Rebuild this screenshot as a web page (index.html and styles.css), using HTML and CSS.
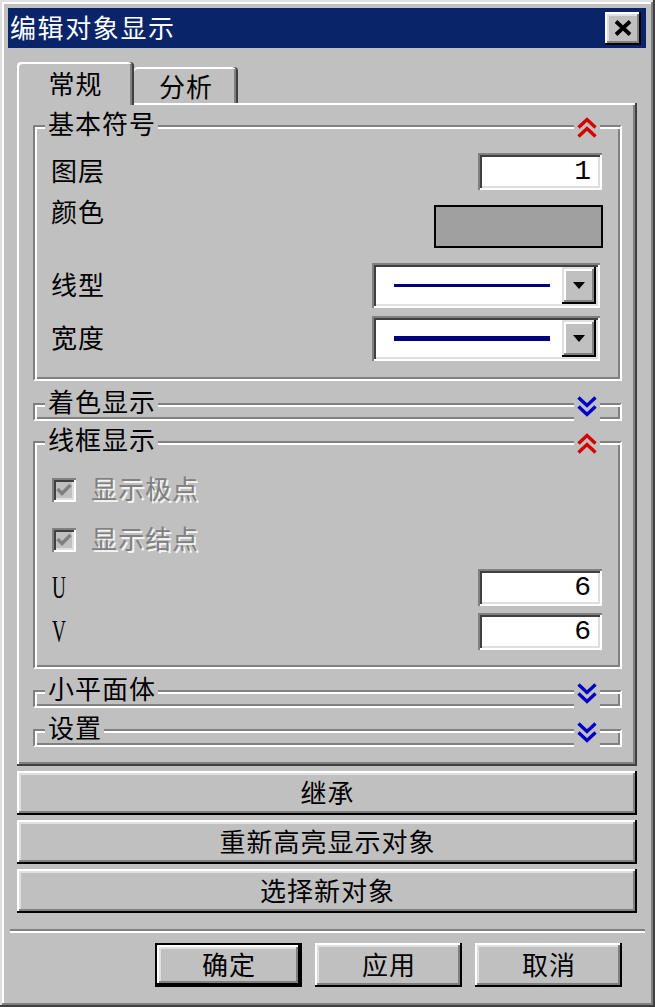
FILE: index.html
```html
<!DOCTYPE html>
<html lang="zh-CN">
<head>
<meta charset="utf-8">
<title>编辑对象显示</title>
<link rel="stylesheet" href="styles.css">
</head>
<body>
<div class="window">
  <div class="titlebar">
    <span class="title">编辑对象显示</span>
    <button class="close" aria-label="关闭">
      <svg width="18" height="16" viewBox="0 0 18 16"><path d="M2 1.5 L16 14.5 M16 1.5 L2 14.5" stroke="#000" stroke-width="3.8" fill="none"/></svg>
    </button>
  </div>

  <div class="tabs">
    <div class="tab active">常规</div>
    <div class="tab">分析</div>
  </div>

  <div class="panel">
    <div class="group g1">
      <div class="ghead">
        <span class="legend">基本符号</span>
        <span class="chev"><svg width="22" height="24" viewBox="0 0 22 24"><path d="M2.5 11.5 L11 3.5 L19.5 11.5 M2.5 20.5 L11 12.5 L19.5 20.5" fill="none" stroke="#d40000" stroke-width="3.4"/></svg></span>
      </div>
      <div class="gbody">
        <div class="row r-layer">
          <span class="label">图层</span>
          <div class="field">1</div>
        </div>
        <div class="row r-color">
          <span class="label top">颜色</span>
          <div class="swatch"></div>
        </div>
        <div class="row r-combo r-type">
          <span class="label">线型</span>
          <div class="combo">
            <div class="combo-value"><span class="line thin"></span></div>
            <div class="combo-btn"><svg width="12" height="7" viewBox="0 0 12 7"><polygon points="0,0 12,0 6,7" fill="#000"/></svg></div>
          </div>
        </div>
        <div class="row r-combo r-width">
          <span class="label">宽度</span>
          <div class="combo">
            <div class="combo-value"><span class="line thick"></span></div>
            <div class="combo-btn"><svg width="12" height="7" viewBox="0 0 12 7"><polygon points="0,0 12,0 6,7" fill="#000"/></svg></div>
          </div>
        </div>
      </div>
    </div>

    <div class="group collapsed g2">
      <div class="ghead">
        <span class="legend">着色显示</span>
        <span class="chev"><svg width="22" height="24" viewBox="0 0 22 24"><path d="M2.5 3.5 L11 11.5 L19.5 3.5 M2.5 12.5 L11 20.5 L19.5 12.5" fill="none" stroke="#0000c8" stroke-width="3.4"/></svg></span>
      </div>
    </div>

    <div class="group g3">
      <div class="ghead">
        <span class="legend">线框显示</span>
        <span class="chev"><svg width="22" height="24" viewBox="0 0 22 24"><path d="M2.5 11.5 L11 3.5 L19.5 11.5 M2.5 20.5 L11 12.5 L19.5 20.5" fill="none" stroke="#d40000" stroke-width="3.4"/></svg></span>
      </div>
      <div class="gbody">
        <div class="row r-check first">
          <span class="checkbox"><svg width="18" height="18" viewBox="0 0 18 18"><path d="M2.5 8 L7 12.5 L15.5 4" fill="none" stroke="#808080" stroke-width="3.4"/></svg></span>
          <span class="disabled-text">显示极点</span>
        </div>
        <div class="row r-check second">
          <span class="checkbox"><svg width="18" height="18" viewBox="0 0 18 18"><path d="M2.5 8 L7 12.5 L15.5 4" fill="none" stroke="#808080" stroke-width="3.4"/></svg></span>
          <span class="disabled-text">显示结点</span>
        </div>
        <div class="row r-u">
          <span class="label serif">U</span>
          <div class="field">6</div>
        </div>
        <div class="row r-v">
          <span class="label serif">V</span>
          <div class="field">6</div>
        </div>
      </div>
    </div>

    <div class="group collapsed g4">
      <div class="ghead">
        <span class="legend">小平面体</span>
        <span class="chev"><svg width="22" height="24" viewBox="0 0 22 24"><path d="M2.5 3.5 L11 11.5 L19.5 3.5 M2.5 12.5 L11 20.5 L19.5 12.5" fill="none" stroke="#0000c8" stroke-width="3.4"/></svg></span>
      </div>
    </div>

    <div class="group collapsed g5">
      <div class="ghead">
        <span class="legend">设置</span>
        <span class="chev"><svg width="22" height="24" viewBox="0 0 22 24"><path d="M2.5 3.5 L11 11.5 L19.5 3.5 M2.5 12.5 L11 20.5 L19.5 12.5" fill="none" stroke="#0000c8" stroke-width="3.4"/></svg></span>
      </div>
    </div>
  </div>

  <div class="actions">
    <button class="btn wide">继承</button>
    <button class="btn wide">重新高亮显示对象</button>
    <button class="btn wide">选择新对象</button>
  </div>

  <div class="separator"></div>

  <div class="footer">
    <button class="btn small default">确定</button>
    <button class="btn small">应用</button>
    <button class="btn small">取消</button>
  </div>
</div>
</body>
</html>
```

FILE: styles.css
```css
* { box-sizing: border-box; }

html, body {
  margin: 0;
  padding: 0;
}

body {
  width: 655px;
  height: 1007px;
  overflow: hidden;
  background: #c0c0c0;
  color: #000;
  font-family: "Noto Sans CJK SC", "Noto Sans", sans-serif;
  font-size: 26px;
  line-height: 26px;
  letter-spacing: 1px;
}

.window {
  width: 655px;
  height: 1007px;
  padding: 8px 9px 0 8px;
  background: #c0c0c0;
  box-shadow:
    inset -2px -2px 0 #404040,
    inset 2px 2px 0 #dfdfdf,
    inset -4px -4px 0 #808080,
    inset 4px 4px 0 #fff;
}

/* title bar */
.titlebar {
  height: 40px;
  background: #0a246a;
  display: flex;
  align-items: center;
  justify-content: space-between;
  padding: 0 5px 0 2px;
}

.title {
  color: #fff;
  font-size: 26px;
  line-height: 40px;
  letter-spacing: 1.6px;
  padding-bottom: 2px;
}

.close {
  width: 36px;
  height: 33px;
  padding: 0;
  margin: 0;
  border: 0;
  background: #c0c0c0;
  display: flex;
  align-items: center;
  justify-content: center;
  box-shadow:
    inset -2px -2px 0 #000,
    inset 2px 2px 0 #fff,
    inset -4px -4px 0 #808080,
    inset 4px 4px 0 #dfdfdf;
}

/* tabs */
.tabs {
  position: relative;
  z-index: 1;
  display: flex;
  align-items: flex-end;
  height: 43px;
  margin: 14px 0 -2px 9px;
}

.tab {
  display: flex;
  justify-content: center;
  background: #c0c0c0;
  border-radius: 4px 4px 0 0;
  box-shadow:
    inset -2px 0 0 #404040,
    inset 2px 2px 0 #fff,
    inset -4px 0 0 #808080;
}

.tab.active {
  width: 117px;
  height: 43px;
  padding-top: 8px;
}

.tab:not(.active) {
  width: 104px;
  height: 36px;
  margin-bottom: 2px;
  padding-top: 6px;
  box-shadow:
    inset -2px 0 0 #404040,
    inset 0 2px 0 #fff,
    inset -4px 0 0 #808080;
}

/* tab page */
.panel {
  margin-left: 9px;
  width: 620px;
  height: 663px;
  padding: 22px 15px 0 16px;
  box-shadow:
    inset -2px -2px 0 #404040,
    inset 2px 2px 0 #fff,
    inset -4px -4px 0 #808080;
}

/* group boxes */
.group {
  border-style: solid;
  border-width: 2px;
  border-color: #808080 #fff #fff #808080;
  box-shadow: inset 2px 2px 0 #fff, inset -2px -2px 0 #808080;
}

.group.collapsed { height: 18px; }
.g2 { margin-top: 22px; }
.g3 { margin-top: 20px; }
.g4 { margin-top: 21px; }
.g5 { margin-top: 21px; }

.ghead {
  display: flex;
  justify-content: space-between;
  align-items: flex-start;
  height: 26px;
  margin-top: -17px;
  padding: 0 20px 0 10px;
}

.legend {
  background: #c0c0c0;
  padding: 0 2px 0 3px;
  line-height: 26px;
}

.chev {
  display: flex;
  align-items: center;
  justify-content: center;
  width: 26px;
  height: 30px;
  margin-top: 3px;
  margin-bottom: -7px;
  background: #c0c0c0;
}

.gbody {
  padding: 17px 18px 18px 16px;
}

.g3 .gbody {
  padding: 25px 18px 17px 16px;
}

.row {
  display: flex;
  align-items: center;
  justify-content: space-between;
}

.label { padding-bottom: 4px; }

.r-layer { height: 37px; }
.r-color { height: 43px; margin-top: 15px; align-items: flex-start; }
.r-type { height: 45px; margin-top: 15px; }
.r-width { height: 45px; margin-top: 8px; }

.label.top { margin-top: -7px; }

.label.serif {
  display: inline-block;
  font-family: "Liberation Serif", serif;
  font-size: 31px;
  letter-spacing: 0;
  padding-bottom: 0;
  transform: scaleX(0.62);
  transform-origin: left center;
  margin-left: 1px;
}

/* inputs */
.field {
  width: 124px;
  height: 37px;
  background: #fff;
  font-family: "Liberation Mono", monospace;
  font-size: 28px;
  letter-spacing: 0;
  line-height: 37px;
  text-align: right;
  padding-right: 11px;
  box-shadow:
    inset 2px 2px 0 #808080,
    inset -2px -2px 0 #fff,
    inset 4px 4px 0 #404040,
    inset -4px -4px 0 #dfdfdf;
}

.swatch {
  width: 169px;
  height: 43px;
  margin-right: -1px;
  background: #a0a0a0;
  border: 2px solid #000;
}

.combo {
  width: 228px;
  height: 45px;
  margin-right: 2px;
  display: flex;
  padding: 4px;
  background: #fff;
  box-shadow:
    inset 2px 2px 0 #808080,
    inset -2px -2px 0 #fff,
    inset 4px 4px 0 #404040,
    inset -4px -4px 0 #dfdfdf;
}

.combo-value {
  flex: 1;
  display: flex;
  align-items: center;
  padding-left: 18px;
}

.line {
  display: block;
  width: 156px;
  background: #000080;
}
.line.thin { height: 3px; }
.line.thick { height: 5px; }

.combo-btn {
  width: 34px;
  display: flex;
  align-items: center;
  justify-content: center;
  background: #c0c0c0;
  box-shadow:
    inset -2px -2px 0 #000,
    inset 2px 2px 0 #dfdfdf,
    inset -4px -4px 0 #808080,
    inset 4px 4px 0 #fff;
}

/* checkboxes */
.r-check {
  height: 26px;
  justify-content: flex-start;
}
.r-check.second { margin-top: 24px; }

.checkbox {
  width: 24px;
  height: 24px;
  margin-left: 1px;
  display: flex;
  align-items: center;
  justify-content: center;
  background: #c0c0c0;
  box-shadow:
    inset 2px 2px 0 #808080,
    inset -2px -2px 0 #fff,
    inset 4px 4px 0 #404040,
    inset -4px -4px 0 #dfdfdf;
}

.disabled-text {
  margin-left: 15px;
  padding-bottom: 4px;
  color: #808080;
  text-shadow: 2px 2px 0 #f4f4f4;
}

.r-u { height: 37px; margin-top: 16px; }
.r-v { height: 37px; margin-top: 7px; }

/* buttons */
.btn {
  margin: 0;
  padding: 0 0 3px 1px;
  border: 0;
  background: #c0c0c0;
  color: #000;
  font-family: "Noto Sans CJK SC", "Noto Sans", sans-serif;
  font-size: 26px;
  line-height: 26px;
  letter-spacing: 1px;
  display: flex;
  align-items: center;
  justify-content: center;
  box-shadow:
    inset -2px -2px 0 #000,
    inset 2px 2px 0 #fff,
    inset -4px -4px 0 #808080,
    inset 4px 4px 0 #dfdfdf;
}

.actions {
  display: flex;
  flex-direction: column;
  gap: 5px;
  width: 620px;
  margin: 5px 0 0 9px;
}

.btn.wide {
  width: 620px;
  height: 44px;
}

.separator {
  height: 4px;
  margin: 16px 1px 0 2px;
  border-top: 2px solid #808080;
  border-bottom: 2px solid #fff;
}

.footer {
  display: flex;
  justify-content: flex-end;
  gap: 13px;
  margin-top: 10px;
  padding-right: 24px;
}

.btn.small {
  width: 147px;
  height: 44px;
}

.btn.default {
  box-shadow:
    inset 0 0 0 2px #000,
    inset -4px -4px 0 #000,
    inset 4px 4px 0 #fff,
    inset -6px -6px 0 #808080,
    inset 6px 6px 0 #dfdfdf;
}
```
